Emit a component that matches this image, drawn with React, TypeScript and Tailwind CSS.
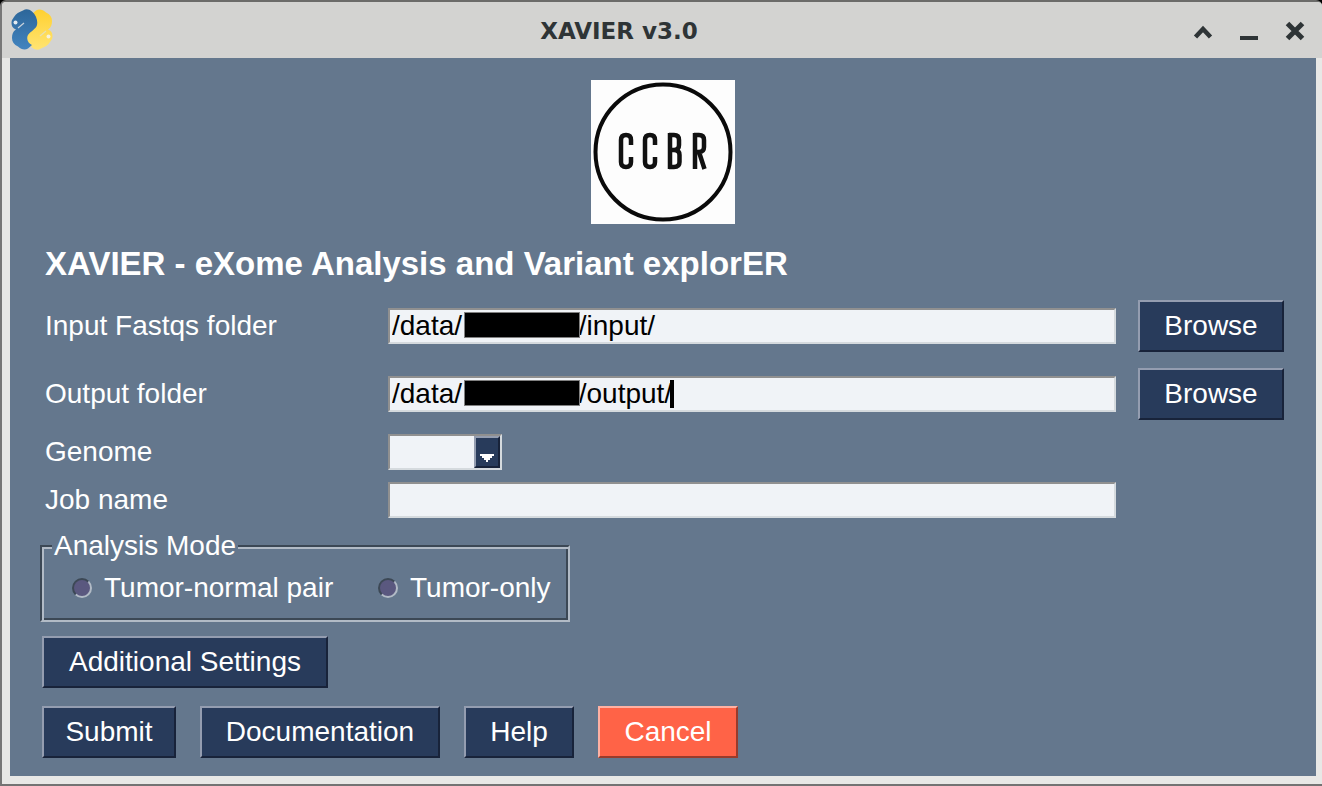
import { useState } from 'react';
import type { ReactNode } from 'react';

const REDACTED = ' '.repeat(15);

const SNAKE =
  'M13 1.500 C16 -0.500 19 0 22 2.500 C26 6 28 11 27 16 C26 20 21 22 18 26 C16 30 18 34 22 36 L18 39.500 C15 41.500 11 40.500 8 37.500 C4 35.500 2 33 2 29 C2 25 3 22.500 6 20.500 L4 19.500 C2 18 1.500 16 1.500 13.500 C1.500 11 3 9.500 4 8 C6 4.500 9 3 13 1.500 Z';

function PythonLogo() {
  return (
    <svg width="44" height="44" viewBox="0 0 44 44" aria-hidden="true">
      <defs>
        <linearGradient id="snakeBlue" x1="0" y1="0" x2="0" y2="1">
          <stop offset="0" stopColor="#2d6699" />
          <stop offset="1" stopColor="#4284bf" />
        </linearGradient>
        <linearGradient id="snakeYellow" x1="0" y1="1" x2="0" y2="0">
          <stop offset="0" stopColor="#ffd02f" />
          <stop offset="1" stopColor="#ffe473" />
        </linearGradient>
      </defs>
      <path d={SNAKE} transform="rotate(180 22 20.500)" fill="url(#snakeYellow)" />
      <path d={SNAKE} fill="url(#snakeBlue)" />
      <circle cx="5.500" cy="13.500" r="2" fill="#e3eaf0" />
      <path d="M14 14 L8 19" stroke="#c9d3dc" strokeWidth="1.200" />
      <circle cx="38.500" cy="27.500" r="2" fill="#f6f2dc" />
      <path d="M30 27 L36 22" stroke="#e6dfb4" strokeWidth="1.200" />
    </svg>
  );
}

function CcbrLogo() {
  return (
    <svg width="144" height="144" viewBox="0 0 144 144" role="img" aria-label="CCBR">
      <rect width="144" height="144" fill="#fdfdfd" />
      <circle cx="72" cy="72" r="67.500" fill="none" stroke="#0a0a0a" strokeWidth="4" />
      <g fill="none" stroke="#111" strokeWidth="4.500">
        <path d="M40 65 V60 Q40 55 35 55 Q30 55 30 60 V82 Q30 87 35 87 Q40 87 40 82 V77" />
        <path d="M64 65 V60 Q64 55 59 55 Q54 55 54 60 V82 Q54 87 59 87 Q64 87 64 82 V77" />
        <path d="M79 53 V89 M78 55 H83 Q88 55 88 60 V65 Q88 70 83 70 H79 M83 70 Q88.500 70 88.500 75 V82 Q88.500 87 83 87 H78" />
        <path d="M104 53 V89 M103 55 H108 Q113 55 113 60 V67 Q113 72 108 72 H104 M108 72 L113.500 89" />
      </g>
    </svg>
  );
}

const bevel =
  'h-[52px] border-2 px-5 text-white whitespace-nowrap flex items-center justify-center';
const navy =
  'bg-[#283b5b] border-t-[#949db0] border-l-[#949db0] border-r-[#18233a] border-b-[#18233a]';
const tomato =
  'bg-[#ff6347] border-t-[#ffb1a3] border-l-[#ffb1a3] border-r-[#993b2b] border-b-[#993b2b]';
const sunken =
  'h-9 w-full bg-[#f0f3f7] border-2 border-t-[#909090] border-l-[#909090] border-r-[#d5dade] border-b-[#d5dade] text-black outline-none';

function Button({ children, width, tone = navy }: { children: ReactNode; width: string; tone?: string }) {
  return (
    <button type="button" className={`${bevel} ${tone} ${width}`}>
      {children}
    </button>
  );
}

function PathRow({ id, label, initial, caret }: { id: string; label: string; initial: string; caret?: boolean }) {
  const [value, setValue] = useState(initial);
  return (
    <div className="flex items-center">
      <label htmlFor={id} className="w-[346px] shrink-0 pl-[3px]">
        {label}
      </label>
      <div className="relative mr-[22px] flex-1">
        <input
          id={id}
          type="text"
          value={value}
          onChange={(e) => setValue(e.target.value)}
          className={`${sunken} block px-0.5`}
        />
        <span className="absolute left-[76px] top-1 h-[26px] w-[116px] border border-[#808080] bg-black" />
        {caret && <span className="absolute left-[282px] top-1 h-7 w-1 bg-black" />}
      </div>
      <Button width="w-[146px]">Browse</Button>
    </div>
  );
}

function Mode({ label, width }: { label: string; width: string }) {
  return (
    <label className={`flex items-center gap-3 whitespace-nowrap ${width}`}>
      <input
        type="radio"
        name="mode"
        className="size-5 shrink-0 appearance-none rounded-full border-2 border-b-[#b2bbc6] border-l-[#3c4855] border-r-[#b2bbc6] border-t-[#3c4855] bg-[#5a587f] checked:bg-white"
      />
      {label}
    </label>
  );
}

export default function App() {
  return (
    <div className="bg-black">
      <div className="min-h-screen rounded-t-md border-y-2 border-l-2 border-b-[#737373] border-l-[#777777] border-t-[#6b6b69] bg-[#e8e8e6] font-['Liberation_Sans',Arial,sans-serif] text-[28px] leading-8 text-white">
        <header className="flex h-14 items-center rounded-t bg-[#d3d3d1] pl-2 pr-4 pt-0.5">
          <PythonLogo />
          <h1 className="flex-1 pr-2 text-center font-['DejaVu_Sans',sans-serif] text-[23px] font-bold text-[#2e3436]">
            XAVIER v3.0
          </h1>
          <div className="flex items-center gap-6 text-[#2e3436]">
            <button type="button" aria-label="Shade">
              <svg width="22" height="22" viewBox="0 0 22 22" className="block">
                <path d="M3.500 17 L11 9 L18.500 17" fill="none" stroke="currentColor" strokeWidth="4.500" />
              </svg>
            </button>
            <button type="button" aria-label="Minimize">
              <svg width="22" height="22" viewBox="0 0 22 22" className="block">
                <rect x="2" y="16" width="18" height="4" fill="currentColor" />
              </svg>
            </button>
            <button type="button" aria-label="Close">
              <svg width="22" height="22" viewBox="0 0 22 22" className="block">
                <path d="M3.500 3.500 L18.500 18.500 M18.500 3.500 L3.500 18.500" stroke="currentColor" strokeWidth="5" />
              </svg>
            </button>
          </div>
        </header>

        <main className="mb-2 ml-2 mr-1.5 bg-[#64778d] px-8 pb-[18px] pt-[22px]">
          <div className="flex justify-center">
            <CcbrLogo />
          </div>
          <h2 className="mt-5 pl-[3px] text-[33px] font-bold leading-10">
            XAVIER - eXome Analysis and Variant explorER
          </h2>

          <div className="mt-4 flex flex-col gap-4">
            <PathRow id="input-folder" label="Input Fastqs folder" initial={`/data/${REDACTED}/input/`} />
            <PathRow id="output-folder" label="Output folder" initial={`/data/${REDACTED}/output/`} caret />
          </div>

          <div className="mt-3.5 flex items-center">
            <label htmlFor="genome" className="w-[346px] shrink-0 pl-[3px]">
              Genome
            </label>
            <div className="relative w-[114px]">
              <select id="genome" className={`${sunken} block appearance-none`}>
                <option value=""></option>
                <option value="hg38">hg38</option>
                <option value="mm10">mm10</option>
              </select>
              <span
                className={`pointer-events-none absolute right-0.5 top-0.5 flex h-8 w-[26px] items-center justify-center border-2 ${navy}`}
              >
                <svg width="14" height="8" viewBox="0 0 14 8" className="mt-3 shrink-0" aria-hidden="true">
                  <path d="M0 0 H14 V2 H12 V4 H10 V6 H8 V8 H6 V6 H4 V4 H2 V2 H0 Z" fill="#fff" />
                </svg>
              </span>
            </div>
          </div>

          <div className="mt-3 flex items-center">
            <label htmlFor="job" className="w-[346px] shrink-0 pl-[3px]">
              Job name
            </label>
            <input id="job" type="text" className={`${sunken} mr-[168px] px-0.5`} />
          </div>

          <fieldset className="-ml-0.5 mt-3 h-[92px] w-[530px] border-2 border-b-[#b2bbc6] border-l-[#3c4855] border-r-[#b2bbc6] border-t-[#3c4855] shadow-[inset_2px_2px_0_#b2bbc6,inset_-2px_-2px_0_#3c4855]">
            <legend className="ml-2.5 bg-[#64778d] px-0.5">Analysis Mode</legend>
            <div className="flex pl-[30px] pt-2.5">
              <Mode label="Tumor-normal pair" width="w-[306px]" />
              <Mode label="Tumor-only" width="w-auto" />
            </div>
          </fieldset>

          <div className="mt-3.5">
            <Button width="w-[286px]">Additional Settings</Button>
          </div>
          <div className="mt-[18px] flex gap-6">
            <Button width="w-[134px]">Submit</Button>
            <Button width="w-[240px]">Documentation</Button>
            <Button width="w-[110px]">Help</Button>
            <Button width="w-[140px]" tone={tomato}>
              Cancel
            </Button>
          </div>
        </main>
      </div>
    </div>
  );
}
